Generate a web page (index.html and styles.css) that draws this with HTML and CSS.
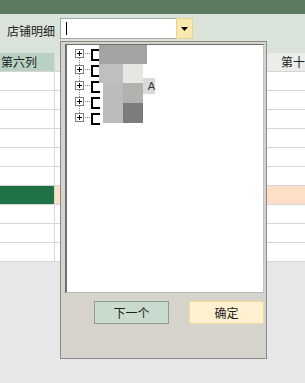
FILE: index.html
```html
<!DOCTYPE html>
<html lang="zh-CN">
<head>
<meta charset="utf-8">
<link rel="stylesheet" href="styles.css">
</head>
<body>
<div class="app">
  <div class="titlebar"></div>
  <div class="toolbar">
    <span class="label">店铺明细</span>
    <div class="combo">
      <div class="combo-input"><span class="caret"></span></div>
      <div class="combo-btn">
        <svg width="7" height="4" viewBox="0 0 7 4"><path d="M0 0H7L3.5 4Z" fill="#000"/></svg>
      </div>
    </div>
  </div>
  <div class="grid">
    <div class="row head"><div class="c c1">第六列</div><div class="c c2"></div><div class="c c3">第十</div></div>
    <div class="row"><div class="c c1"></div><div class="c c2"></div><div class="c c3"></div></div>
    <div class="row"><div class="c c1"></div><div class="c c2"></div><div class="c c3"></div></div>
    <div class="row"><div class="c c1"></div><div class="c c2"></div><div class="c c3"></div></div>
    <div class="row"><div class="c c1"></div><div class="c c2"></div><div class="c c3"></div></div>
    <div class="row"><div class="c c1"></div><div class="c c2"></div><div class="c c3"></div></div>
    <div class="row"><div class="c c1"></div><div class="c c2"></div><div class="c c3"></div></div>
    <div class="row sel"><div class="c c1"></div><div class="c c2"></div><div class="c c3"></div></div>
    <div class="row"><div class="c c1"></div><div class="c c2"></div><div class="c c3"></div></div>
    <div class="row"><div class="c c1"></div><div class="c c2"></div><div class="c c3"></div></div>
    <div class="row"><div class="c c1"></div><div class="c c2"></div><div class="c c3"></div></div>
  </div>

  <div class="popup">
    <div class="list">
      <div class="item">
        <svg class="node" width="16" height="16" viewBox="0 0 16 16"><rect x="0.5" y="3.5" width="8" height="8" fill="#fff" stroke="#7f7f7f"/><path d="M2 7.5H7M4.5 5V10" stroke="#000"/><path d="M4.5 12V16M10 7.5H15" stroke="#888" stroke-dasharray="1 1"/></svg>
        <span class="check"></span>
      </div>
      <div class="item">
        <svg class="node" width="16" height="16" viewBox="0 0 16 16"><rect x="0.5" y="3.5" width="8" height="8" fill="#fff" stroke="#7f7f7f"/><path d="M2 7.5H7M4.5 5V10" stroke="#000"/><path d="M4.5 0V3M4.5 12V16M10 7.5H15" stroke="#888" stroke-dasharray="1 1"/></svg>
        <span class="check"></span>
      </div>
      <div class="item">
        <svg class="node" width="16" height="16" viewBox="0 0 16 16"><rect x="0.5" y="3.5" width="8" height="8" fill="#fff" stroke="#7f7f7f"/><path d="M2 7.5H7M4.5 5V10" stroke="#000"/><path d="M4.5 0V3M4.5 12V16M10 7.5H15" stroke="#888" stroke-dasharray="1 1"/></svg>
        <span class="check"></span>
      </div>
      <div class="item">
        <svg class="node" width="16" height="16" viewBox="0 0 16 16"><rect x="0.5" y="3.5" width="8" height="8" fill="#fff" stroke="#7f7f7f"/><path d="M2 7.5H7M4.5 5V10" stroke="#000"/><path d="M4.5 0V3M4.5 12V16M10 7.5H15" stroke="#888" stroke-dasharray="1 1"/></svg>
        <span class="check"></span>
      </div>
      <div class="item">
        <svg class="node" width="16" height="16" viewBox="0 0 16 16"><rect x="0.5" y="3.5" width="8" height="8" fill="#fff" stroke="#7f7f7f"/><path d="M2 7.5H7M4.5 5V10" stroke="#000"/><path d="M4.5 0V3M10 7.5H15" stroke="#888" stroke-dasharray="1 1"/></svg>
        <span class="check"></span>
      </div>
      <div class="mosaic m-a"></div>
      <div class="mosaic m-b"></div>
      <div class="mosaic m-c"></div>
      <div class="mosaic m-d"></div>
      <div class="mosaic m-e"></div>
      <div class="mosaic m-f"></div>
      <div class="mosaic m-g">A</div>
    </div>
    <div class="actions">
      <button class="btn btn-next">下一个</button>
      <button class="btn btn-ok">确定</button>
    </div>
  </div>
</div>
</body>
</html>
```

FILE: styles.css
```css
* { box-sizing: border-box; }
html, body { margin: 0; padding: 0; }
body {
  width: 305px;
  height: 383px;
  overflow: hidden;
  background: #e6e7e8;
  font-family: "Noto Sans CJK SC", "Noto Sans", sans-serif;
  font-size: 12px;
  color: #1e1e1e;
}
.app {
  position: relative;
  width: 305px;
  height: 383px;
}
.titlebar {
  height: 14px;
  background: #5c7a5d;
}
.toolbar {
  height: 39px;
  background: #d9e3da;
  display: flex;
  align-items: flex-start;
  padding: 4px 0 0 7px;
}
.label {
  width: 53px;
  line-height: 21px;
  margin-top: 2px;
  white-space: nowrap;
}
.combo {
  display: flex;
}
.combo-input {
  width: 116px;
  height: 21px;
  background: #fff;
  border: 1px solid #a3aaa3;
  border-right: none;
  padding: 3px 0 0 5px;
}
.caret {
  display: block;
  width: 1px;
  height: 13px;
  background: #000;
}
.combo-btn {
  width: 17px;
  height: 21px;
  background: #fbe8af;
  border: 1px solid #e8d28e;
  display: flex;
  align-items: center;
  justify-content: center;
}
.combo-btn svg { display: block; margin-top: 1px; }

.grid {
  background: #fff;
}
.row {
  display: flex;
  height: 19px;
}
.c {
  height: 19px;
  border-bottom: 1px solid #d6d6d6;
  line-height: 18px;
  white-space: nowrap;
  overflow: hidden;
}
.c1 {
  width: 55px;
  border-right: 1px solid #d6d6d6;
  padding-left: 1px;
}
.c2 { width: 212px; }
.c3 { flex: 1; padding-left: 14px; }
.head .c1 { background: #b9d1c3; }
.head .c2 { background: #dfe6df; }
.head .c3 { background: #eaedea; }
.sel .c1 { background: #1e7246; }
.sel .c2, .sel .c3 { background: #fddfc6; }

.popup {
  position: absolute;
  left: 60px;
  top: 41px;
  width: 207px;
  height: 318px;
  background: #d6d2cc;
  border: 1px solid #8a8a8a;
  padding: 2px 2px 0 4px;
}
.list {
  position: relative;
  height: 249px;
  background: #fff;
  border-top: 1px solid #6e6e6e;
  border-left: 2px solid #6e6e6e;
  border-right: 1px solid #c4c4c4;
  border-bottom: 1px solid #b9b9b9;
  padding: 1px 0 0 8px;
}
.item {
  height: 16px;
  display: flex;
  align-items: center;
}
.node { display: block; flex: none; }
.check {
  width: 9px;
  height: 12px;
  border: 2px solid #000;
  border-right: none;
  margin-top: 1px;
}
.mosaic {
  position: absolute;
}
.m-a { left: 32px; top: 0; width: 48px; height: 19px; background: #a3a3a3; }
.m-b { left: 32px; top: 19px; width: 24px; height: 19px; background: #bfbfbf; }
.m-c { left: 56px; top: 19px; width: 20px; height: 19px; background: #e6e6e2; }
.m-d { left: 36px; top: 38px; width: 20px; height: 40px; background: #bcbcbc; }
.m-e { left: 56px; top: 38px; width: 20px; height: 20px; background: #b3b1ad; }
.m-f { left: 56px; top: 58px; width: 20px; height: 20px; background: #7c7c7c; }
.m-g {
  left: 76px; top: 33px; width: 12px; height: 16px;
  background: #dadada;
  font-family: "Liberation Sans", sans-serif;
  font-size: 11px;
  line-height: 16px;
  text-align: right;
  color: #333;
}
.actions {
  display: flex;
  gap: 20px;
  padding-left: 29px;
  margin-top: 8px;
}
.btn {
  width: 75px;
  height: 23px;
  padding: 0;
  font: inherit;
  font-size: 12px;
  color: #1e1e1e;
  line-height: 21px;
  text-align: center;
}
.btn-next {
  background: #c9dbcd;
  border: 1px solid #8c9e91;
}
.btn-ok {
  background: #fff0d2;
  border: 1px solid #f1db98;
}
```
